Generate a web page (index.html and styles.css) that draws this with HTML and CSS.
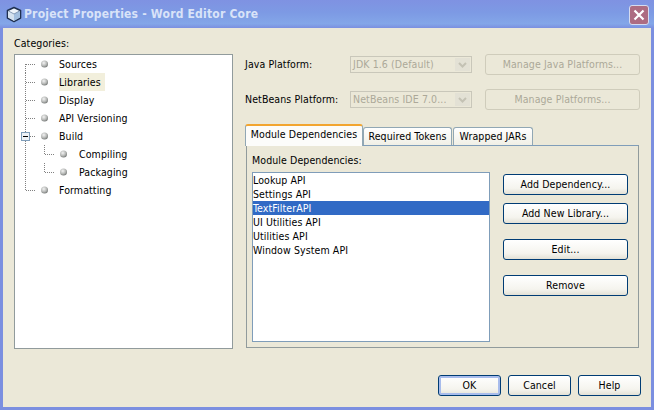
FILE: index.html
```html
<!DOCTYPE html>
<html lang="en">
<head>
    <meta charset="UTF-8">
    <meta name="viewport" content="width=device-width, initial-scale=1.0">
    <title>Project Properties - Word Editor Core</title>
    <link rel="stylesheet" href="styles.css">
</head>
<body>
    <svg class="defs" width="0" height="0">
        <defs>
            <radialGradient id="ball" cx="40%" cy="35%" r="70%">
                <stop offset="0" stop-color="#f4f4f4"/>
                <stop offset="0.6" stop-color="#b4b6b4"/>
                <stop offset="1" stop-color="#6f7270"/>
            </radialGradient>
        </defs>
    </svg>
    <div class="window">
        <header class="titlebar">
            <svg class="app-icon" width="16" height="17" viewBox="0 0 16 17">
                <path d="M8 1.5 L14.5 4.5 V12 L8 15.5 L1.5 12 V4.5 Z" fill="#eef4fa" stroke="#1f3050" stroke-width="1.6" stroke-linejoin="round"/>
                <path d="M8 8 L14 5 V11.6 L8 15 Z" fill="#a3bfdf"/>
                <path d="M2 5 L8 8 V15 L2 11.6 Z" fill="#d5e2ef"/>
                <path d="M2.5 5 L8 8 L13.5 5" fill="none" stroke="#6d85a6" stroke-width="0.8"/>
            </svg>
            <span class="title">Project Properties - Word Editor Core</span>
            <div class="close">
                <svg width="12" height="12" viewBox="0 0 12 12"><path d="M1.5 1.5 L10.5 10.5 M10.5 1.5 L1.5 10.5" stroke="#fff" stroke-width="2.2"/></svg>
            </div>
        </header>

        <div class="client">
            <div class="main">
                <section class="categories">
                    <div class="cat-label">Categories:</div>
                    <div class="tree">
                        <div class="node">
                            <svg width="44" height="18"><path d="M10.5 9 V18 M11 9.5 H21" class="dots"/><circle cx="29.5" cy="9" r="3.5" fill="url(#ball)"/></svg>
                            <span>Sources</span>
                        </div>
                        <div class="node">
                            <svg width="44" height="18"><path d="M10.5 0 V18 M11 9.5 H21" class="dots"/><circle cx="29.5" cy="9" r="3.5" fill="url(#ball)"/></svg>
                            <span class="current">Libraries</span>
                        </div>
                        <div class="node">
                            <svg width="44" height="18"><path d="M10.5 0 V18 M11 9.5 H21" class="dots"/><circle cx="29.5" cy="9" r="3.5" fill="url(#ball)"/></svg>
                            <span>Display</span>
                        </div>
                        <div class="node">
                            <svg width="44" height="18"><path d="M10.5 0 V18 M11 9.5 H21" class="dots"/><circle cx="29.5" cy="9" r="3.5" fill="url(#ball)"/></svg>
                            <span>API Versioning</span>
                        </div>
                        <div class="node">
                            <svg width="44" height="18">
                                <path d="M10.5 0 V18 M11 9.5 H21" class="dots"/>
                                <rect x="6.5" y="5.5" width="8" height="8" fill="#eef2f6" stroke="#7f9db9"/>
                                <path d="M8 9.5 H13" stroke="#000" stroke-width="1"/>
                                <circle cx="29.5" cy="9" r="3.5" fill="url(#ball)"/>
                            </svg>
                            <span>Build</span>
                        </div>
                        <div class="node">
                            <svg width="64" height="18"><path d="M10.5 0 V18 M29.5 0 V9 M30 9.5 H40" class="dots"/><circle cx="48.5" cy="9" r="3.5" fill="url(#ball)"/></svg>
                            <span>Compiling</span>
                        </div>
                        <div class="node">
                            <svg width="64" height="18"><path d="M10.5 0 V18 M29.5 0 V9 M30 9.5 H40" class="dots"/><circle cx="48.5" cy="9" r="3.5" fill="url(#ball)"/></svg>
                            <span>Packaging</span>
                        </div>
                        <div class="node">
                            <svg width="44" height="18"><path d="M10.5 0 V9 M11 9.5 H21" class="dots"/><circle cx="29.5" cy="9" r="3.5" fill="url(#ball)"/></svg>
                            <span>Formatting</span>
                        </div>
                    </div>
                </section>

                <section class="settings">
                    <div class="platform-row">
                        <label>Java Platform:</label>
                        <div class="combo"><span>JDK 1.6 (Default)</span><i class="arrow"><svg width="9" height="6" viewBox="0 0 9 6"><path d="M1 1 L4.5 4.5 L8 1" fill="none" stroke="#c4c2b4" stroke-width="2"/></svg></i></div>
                        <button class="btn manage" disabled>Manage Java Platforms...</button>
                    </div>
                    <div class="platform-row">
                        <label>NetBeans Platform:</label>
                        <div class="combo"><span>NetBeans IDE 7.0...</span><i class="arrow"><svg width="9" height="6" viewBox="0 0 9 6"><path d="M1 1 L4.5 4.5 L8 1" fill="none" stroke="#c4c2b4" stroke-width="2"/></svg></i></div>
                        <button class="btn manage" disabled>Manage Platforms...</button>
                    </div>

                    <div class="tabs">
                        <div class="tab active">Module Dependencies</div>
                        <div class="tab tab-tokens">Required Tokens</div>
                        <div class="tab tab-jars">Wrapped JARs</div>
                    </div>
                    <div class="tab-panel">
                        <div class="panel-label">Module Dependencies:</div>
                        <div class="panel-body">
                            <ul class="dep-list">
                                <li>Lookup API</li>
                                <li>Settings API</li>
                                <li class="selected">TextFilterAPI</li>
                                <li>UI Utilities API</li>
                                <li>Utilities API</li>
                                <li>Window System API</li>
                            </ul>
                            <div class="dep-buttons">
                                <button class="btn">Add Dependency...</button>
                                <button class="btn">Add New Library...</button>
                                <button class="btn spaced">Edit...</button>
                                <button class="btn spaced">Remove</button>
                            </div>
                        </div>
                    </div>
                </section>
            </div>

            <footer class="footer">
                <button class="btn default">OK</button>
                <button class="btn">Cancel</button>
                <button class="btn">Help</button>
            </footer>
        </div>
    </div>
</body>
</html>
```

FILE: styles.css
```css
html, body {
    margin: 0;
    padding: 0;
}
body {
    width: 654px;
    height: 410px;
    overflow: hidden;
    font-family: "DejaVu Sans Condensed", "DejaVu Sans", sans-serif;
    font-stretch: condensed;
    font-size: 10.5px;
    letter-spacing: 0.1px;
    color: #000;
    background-color: #7b8fe0;
}
.defs {
    position: absolute;
}
.window {
    display: flex;
    flex-direction: column;
    height: 410px;
}
.titlebar {
    display: flex;
    align-items: center;
    height: 28px;
    box-sizing: border-box;
    padding: 0 5px 0 6px;
    background: linear-gradient(to bottom, #7f92e2 0%, #7d9ae4 45%, #83a6e8 85%, #7b8fe0 100%);
}
.app-icon {
    margin-right: 2px;
}
.title {
    flex: 1;
    font-weight: bold;
    font-size: 12px;
    letter-spacing: 0.2px;
    color: #d9e3f8;
}
.close {
    display: flex;
    align-items: center;
    justify-content: center;
    width: 18px;
    height: 18px;
    margin-top: 1px;
    border: 1px solid #d5dcf0;
    border-radius: 3px;
    background-color: #ad6c82;
}
.client {
    flex: none;
    width: 648px;
    height: 379px;
    margin-left: 3px;
    background-color: #ebe8d8;
}
.main {
    display: flex;
    gap: 12px;
    padding-left: 11px;
}
.categories {
    width: 219px;
}
.cat-label {
    height: 14px;
    line-height: 14px;
    padding-top: 8px;
    margin-bottom: 4px;
}
.tree {
    height: 295px;
    box-sizing: border-box;
    border: 1px solid #919b9c;
    background-color: #fff;
}
.node {
    display: flex;
    height: 18px;
    line-height: 18px;
}
.node svg {
    flex: none;
}
.dots {
    fill: none;
    stroke: #808080;
    stroke-width: 1;
    stroke-dasharray: 1 1;
}
.current {
    background-color: #f2efdc;
    padding-right: 4px;
}
.settings {
    width: 395px;
    padding-top: 26px;
}
.platform-row {
    display: flex;
    align-items: center;
    height: 21px;
    margin-bottom: 14px;
}
.platform-row label {
    width: 105px;
    padding-bottom: 2px;
}
.combo {
    display: flex;
    align-items: center;
    justify-content: space-between;
    width: 122px;
    height: 17px;
    box-sizing: border-box;
    border: 1px solid #c9c7ba;
    padding: 0 1px 0 2px;
    color: #aca899;
    white-space: nowrap;
}
.combo span {
    padding-bottom: 2px;
}
.arrow {
    display: flex;
    align-items: center;
    justify-content: center;
    width: 15px;
    height: 13px;
    background-color: #e3e1d5;
}
.btn {
    display: block;
    width: 63px;
    height: 21px;
    padding: 0 0 2px;
    box-sizing: border-box;
    font-family: inherit;
    font-stretch: inherit;
    font-size: inherit;
    letter-spacing: inherit;
    color: #000;
    border: 1px solid #003c74;
    border-radius: 3px;
    background: linear-gradient(to bottom, #fff 0%, #f5f4ee 70%, #e3e1d6 100%);
}
.btn.default {
    box-shadow: inset 0 0 0 2px #a8bcec;
}
.btn.manage {
    width: 155px;
    margin-left: 13px;
    color: #aca899;
    border-color: #cfccbb;
    background: #ebe8d8;
}
.tabs {
    display: flex;
    align-items: flex-end;
    height: 21px;
}
.tab {
    box-sizing: border-box;
    height: 18px;
    line-height: 17px;
    text-align: center;
    white-space: nowrap;
    border: 1px solid #91a7b4;
    border-bottom: none;
    border-radius: 3px 3px 0 0;
    background: linear-gradient(to bottom, #fff, #f0efe6);
}
.tab.active {
    width: 118px;
    height: 22px;
    margin-bottom: -1px;
    position: relative;
    line-height: 16px;
    border-top: 2px solid #f2a530;
    background: #fcfcfa;
}
.tab-tokens {
    width: 89px;
}
.tab-jars {
    width: 80px;
    margin-left: 1px;
}
.tab-panel {
    width: 393px;
    height: 203px;
    margin-left: 1px;
    box-sizing: border-box;
    border: 1px solid #919b9c;
    border-top-color: #7f9db9;
    padding: 7px 0 0 5px;
}
.panel-label {
    height: 14px;
    line-height: 14px;
    margin-bottom: 5px;
}
.panel-body {
    display: flex;
    gap: 13px;
}
.dep-list {
    list-style: none;
    width: 238px;
    height: 170px;
    box-sizing: border-box;
    margin: 0;
    padding: 0;
    border: 1px solid #7f9db9;
    background-color: #fff;
}
.dep-list li {
    height: 14px;
    line-height: 14px;
}
.dep-list .selected {
    background-color: #316ac5;
    color: #fff;
}
.dep-buttons {
    display: flex;
    flex-direction: column;
    gap: 8px;
    padding-top: 2px;
}
.dep-buttons .btn {
    width: 125px;
}
.dep-buttons .spaced {
    margin-top: 7px;
}
.footer {
    display: flex;
    justify-content: flex-end;
    gap: 7px;
    margin-top: 26px;
    padding-right: 10px;
}
```
